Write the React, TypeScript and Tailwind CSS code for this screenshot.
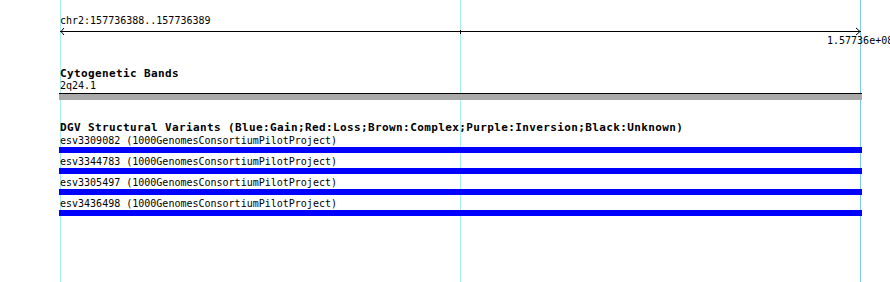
import React from "react";

const variants = ["esv3309082", "esv3344783", "esv3305497", "esv3436498"];

function Ruler() {
  return (
    <svg width={801} height={10} className="ml-[1px] block" shapeRendering="crispEdges">
      <rect x={0} y={5} width={801} height={1} fill="#000" />
      <rect x={400} y={4} width={1} height={4} fill="#000" />
      <polyline points="4,2 1,5.5 4,9" fill="none" stroke="#000" strokeWidth={1} shapeRendering="auto" />
      <polyline points="796,2 800,5.5 796,9" fill="none" stroke="#000" strokeWidth={1} shapeRendering="auto" />
    </svg>
  );
}

export default function App() {
  return (
    <div
      className="relative w-[890px] h-[282px] overflow-hidden bg-white text-black text-[10px] leading-[10px]"
      style={{ fontFamily: '"DejaVu Sans Mono", "Liberation Mono", monospace' }}
    >
      {/* grid lines */}
      <div className="absolute top-0 bottom-0 left-[60px] w-px bg-[#aaeeee]" />
      <div className="absolute top-0 bottom-0 left-[460px] w-px bg-[#aaeeee]" />
      <div className="absolute top-0 bottom-0 left-[860px] w-px bg-[#80c8f0]" />

      <div className="relative flex flex-col pl-[59px]">
        <div className="mt-[16px] h-[10px] pl-[1px] whitespace-nowrap">chr2:157736388..157736389</div>
        <Ruler />
        <div className="h-[10px] pl-[768px] whitespace-nowrap">1.57736e+08</div>

        <div className="mt-[23px] h-[10px] pl-[1px] text-[11px] font-bold tracking-[0.38px] whitespace-nowrap">
          Cytogenetic Bands
        </div>
        <div className="mt-[2px] h-[10px] pl-[1px] whitespace-nowrap">2q24.1</div>
        <div className="mt-[2px] w-[803px] h-[7px] border-t border-black bg-[#a9a9a9]" />

        <div className="mt-[23px] h-[10px] pl-[1px] text-[11px] font-bold tracking-[0.38px] whitespace-nowrap">
          DGV Structural Variants (Blue:Gain;Red:Loss;Brown:Complex;Purple:Inversion;Black:Unknown)
        </div>
        {variants.map((id, i) => (
          <div key={id} className="flex flex-col">
            <div className={(i === 0 ? "mt-[3px]" : "mt-[4px]") + " h-[10px] pl-[1px] whitespace-nowrap"}>
              {id} (1000GenomesConsortiumPilotProject)
            </div>
            <div className="mt-[1px] w-[803px] h-[6px] bg-[#0000ff]" />
          </div>
        ))}
      </div>
    </div>
  );
}
